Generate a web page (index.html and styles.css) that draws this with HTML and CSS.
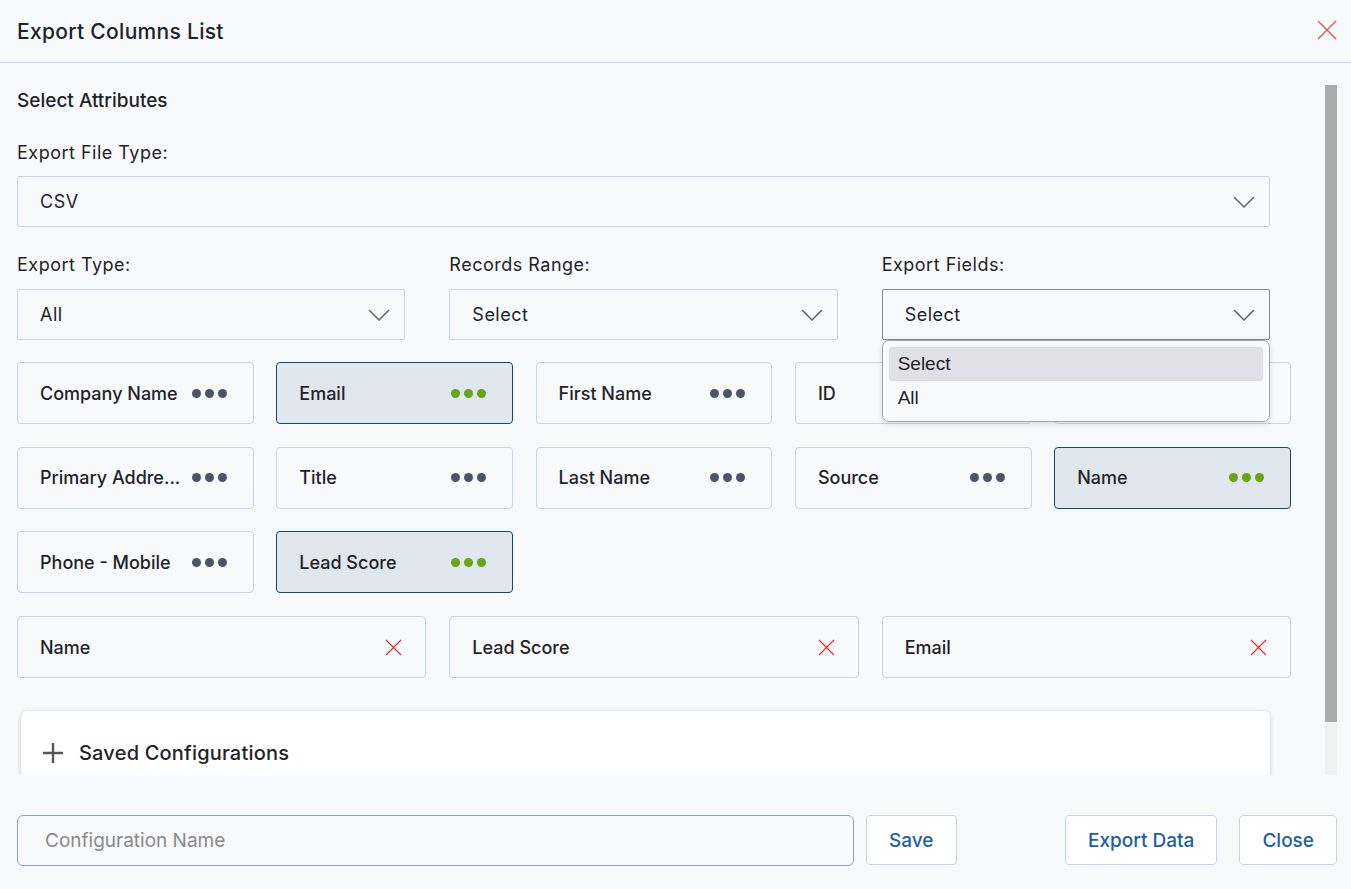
FILE: index.html
```html
<!DOCTYPE html>
<html lang="en">
<head>
    <meta charset="UTF-8">
    <meta name="viewport" content="width=device-width, initial-scale=1.0">
    <title>Export Columns List</title>
    <link rel="stylesheet" href="styles.css">
</head>
<body>

    <div class="modal">
        <div class="modal-header">
            <h2 class="modal-title">Export Columns List</h2>
            <button class="close-icon" type="button" aria-label="Close">
                <svg width="20" height="20" viewBox="0 0 20 20"><path d="M1 1L19 19M19 1L1 19" stroke="#e35656" stroke-width="1.4" fill="none"/></svg>
            </button>
        </div>

        <div class="modal-body">
            <div class="body-scroll">
                <div class="body-inner">
                    <h3 class="section-title">Select Attributes</h3>

                    <div class="field field-wide">
                        <label>Export File Type:</label>
                        <div class="select">
                            <span>CSV</span>
                            <svg class="chevron" width="22" height="12" viewBox="0 0 22 12"><path d="M1 1L11 11L21 1" stroke="#666" stroke-width="1.5" fill="none"/></svg>
                        </div>
                    </div>

                    <div class="field-row">
                        <div class="field">
                            <label>Export Type:</label>
                            <div class="select">
                                <span>All</span>
                                <svg class="chevron" width="22" height="12" viewBox="0 0 22 12"><path d="M1 1L11 11L21 1" stroke="#666" stroke-width="1.5" fill="none"/></svg>
                            </div>
                        </div>
                        <div class="field">
                            <label>Records Range:</label>
                            <div class="select">
                                <span>Select</span>
                                <svg class="chevron" width="22" height="12" viewBox="0 0 22 12"><path d="M1 1L11 11L21 1" stroke="#666" stroke-width="1.5" fill="none"/></svg>
                            </div>
                        </div>
                        <div class="field">
                            <label>Export Fields:</label>
                            <div class="select select-open">
                                <span>Select</span>
                                <svg class="chevron" width="22" height="12" viewBox="0 0 22 12"><path d="M1 1L11 11L21 1" stroke="#666" stroke-width="1.5" fill="none"/></svg>
                                <div class="dropdown">
                                    <div class="option active">Select</div>
                                    <div class="option">All</div>
                                </div>
                            </div>
                        </div>
                    </div>

                    <div class="chip-grid">
                        <div class="chip"><span class="chip-text">Company Name</span><span class="dots"><i></i><i></i><i></i></span></div>
                        <div class="chip selected"><span class="chip-text">Email</span><span class="dots"><i></i><i></i><i></i></span></div>
                        <div class="chip"><span class="chip-text">First Name</span><span class="dots"><i></i><i></i><i></i></span></div>
                        <div class="chip"><span class="chip-text">ID</span><span class="dots"><i></i><i></i><i></i></span></div>
                        <div class="chip"><span class="chip-text">Lead Source</span><span class="dots"><i></i><i></i><i></i></span></div>

                        <div class="chip" title="Primary Address"><span class="chip-text">Primary Addre...</span><span class="dots"><i></i><i></i><i></i></span></div>
                        <div class="chip"><span class="chip-text">Title</span><span class="dots"><i></i><i></i><i></i></span></div>
                        <div class="chip"><span class="chip-text">Last Name</span><span class="dots"><i></i><i></i><i></i></span></div>
                        <div class="chip"><span class="chip-text">Source</span><span class="dots"><i></i><i></i><i></i></span></div>
                        <div class="chip selected"><span class="chip-text">Name</span><span class="dots"><i></i><i></i><i></i></span></div>

                        <div class="chip"><span class="chip-text">Phone - Mobile</span><span class="dots"><i></i><i></i><i></i></span></div>
                        <div class="chip selected"><span class="chip-text">Lead Score</span><span class="dots"><i></i><i></i><i></i></span></div>
                    </div>

                    <div class="picked-grid">
                        <div class="picked">
                            <span>Name</span>
                            <svg width="17" height="17" viewBox="0 0 17 17"><path d="M1 1L16 16M16 1L1 16" stroke="#e0282b" stroke-width="1.1" fill="none"/></svg>
                        </div>
                        <div class="picked">
                            <span>Lead Score</span>
                            <svg width="17" height="17" viewBox="0 0 17 17"><path d="M1 1L16 16M16 1L1 16" stroke="#e0282b" stroke-width="1.1" fill="none"/></svg>
                        </div>
                        <div class="picked">
                            <span>Email</span>
                            <svg width="17" height="17" viewBox="0 0 17 17"><path d="M1 1L16 16M16 1L1 16" stroke="#e0282b" stroke-width="1.1" fill="none"/></svg>
                        </div>
                    </div>

                    <div class="config-card">
                        <svg width="20" height="20" viewBox="0 0 20 20"><path d="M10 0V20M0 10H20" stroke="#555" stroke-width="2.4" fill="none"/></svg>
                        <span>Saved Configurations</span>
                    </div>
                </div>
            </div>
            <div class="scrollbar"><div class="thumb"></div></div>
        </div>

        <div class="modal-footer">
            <input type="text" class="config-input" placeholder="Configuration Name">
            <button class="btn" type="button">Save</button>
            <button class="btn btn-push" type="button">Export Data</button>
            <button class="btn" type="button">Close</button>
        </div>
    </div>

</body>
</html>
```

FILE: styles.css
```css
body {
    margin: 0;
    font-family: 'Inter', 'Liberation Sans', sans-serif;
    background-color: #f8f9fb;
    color: #1f2328;
}

.modal {
    width: 1351px;
    height: 889px;
    display: flex;
    flex-direction: column;
}

.modal-header {
    height: 62px;
    display: flex;
    align-items: center;
    justify-content: space-between;
    padding: 0 14px 0 17px;
    border-bottom: 1px solid #c8d5e6;
}

.modal-title {
    margin: 0;
    font-size: 21px;
    font-weight: 500;
    letter-spacing: 0.3px;
}

.close-icon {
    border: none;
    background: none;
    padding: 0;
    width: 20px;
    height: 20px;
    margin-top: -2px;
    cursor: pointer;
}

.modal-body {
    display: flex;
    height: 690px;
    margin-top: 22px;
    padding-right: 14px;
}

.body-scroll {
    flex: 1;
    overflow: hidden;
}

.body-inner {
    padding: 4px 0 0 17px;
}

.section-title {
    margin: 0;
    font-size: 19px;
    font-weight: 500;
    line-height: 24px;
}

.field label {
    display: block;
    font-size: 18px;
    letter-spacing: 0.5px;
    line-height: 24px;
    margin-bottom: 12px;
}

.field-wide {
    width: 1253px;
    margin-top: 28px;
}

.field-wide label {
    margin-bottom: 11px;
}

.field-row {
    width: 1253px;
    display: grid;
    grid-template-columns: repeat(3, minmax(0, 1fr));
    column-gap: 44px;
    margin-top: 26px;
}

.select {
    position: relative;
    height: 51px;
    box-sizing: border-box;
    display: flex;
    align-items: center;
    justify-content: space-between;
    padding: 0 14px 0 22px;
    border: 1px solid #c8d5e6;
    border-radius: 2px;
    font-size: 18px;
    letter-spacing: 0.5px;
}

.select-open {
    border-color: #8a8a8a;
}

.dropdown {
    position: absolute;
    left: -1px;
    right: -1px;
    top: 50px;
    padding: 6px;
    background-color: #f8f9fb;
    border: 1px solid #a5a5a5;
    border-radius: 7px;
    box-shadow: 0 2px 6px rgba(0, 0, 0, 0.12);
    font-family: 'Liberation Sans', Arial, sans-serif;
    font-size: 19px;
    letter-spacing: 0;
    z-index: 5;
}

.option {
    height: 34px;
    line-height: 34px;
    padding-left: 9px;
    border-radius: 4px;
}

.option.active {
    background-color: #e1e0e6;
}

.chip-grid {
    width: 1274px;
    display: grid;
    grid-template-columns: repeat(5, minmax(0, 1fr));
    column-gap: 22.5px;
    row-gap: 22.5px;
    margin-top: 22px;
}

.chip {
    min-width: 0;
    height: 62px;
    box-sizing: border-box;
    display: flex;
    align-items: center;
    gap: 8px;
    padding: 0 26px 0 22px;
    border: 1px solid #c8d5e6;
    border-radius: 4px;
    font-size: 18px;
    font-weight: 500;
}

.chip.selected {
    background-color: #e1e7ef;
    border-color: #0d4a6e;
}

.chip-text {
    flex: 1;
    min-width: 0;
    white-space: nowrap;
    overflow: hidden;
}

.dots {
    display: flex;
    flex-shrink: 0;
    gap: 4px;
}

.dots i {
    width: 9px;
    height: 9px;
    border-radius: 50%;
    background-color: #4b5567;
}

.chip.selected .dots i {
    background-color: #68a512;
}

.picked-grid {
    width: 1274px;
    display: grid;
    grid-template-columns: repeat(3, minmax(0, 1fr));
    column-gap: 23px;
    margin-top: 23px;
}

.picked {
    height: 62px;
    box-sizing: border-box;
    display: flex;
    align-items: center;
    justify-content: space-between;
    padding: 0 23px 0 22px;
    border: 1px solid #c8d5e6;
    border-radius: 4px;
    font-size: 18px;
    font-weight: 500;
}

.config-card {
    width: 1249px;
    height: 90px;
    box-sizing: border-box;
    margin: 33px 0 32px 4px;
    display: flex;
    align-items: flex-start;
    gap: 16px;
    padding: 32px 0 0 22px;
    background-color: #fff;
    border-radius: 6px;
    box-shadow: 0 1px 4px rgba(0, 0, 0, 0.22);
    font-size: 20px;
    font-weight: 500;
    letter-spacing: 0.2px;
}

.config-card span {
    line-height: 20px;
}

.scrollbar {
    width: 12px;
    background-color: #f1f1f1;
}

.thumb {
    height: 637px;
    background-color: #ababab;
}

.modal-footer {
    display: flex;
    align-items: flex-start;
    padding: 40px 14px 0 17px;
}

.config-input {
    width: 837px;
    height: 51px;
    box-sizing: border-box;
    padding: 0 27px;
    border: 1px solid #8fa1ba;
    border-radius: 6px;
    background-color: #f8f9fb;
    font-family: 'Inter', sans-serif;
    font-size: 19px;
    color: #1f2328;
}

.config-input::placeholder {
    color: #8a8a8a;
}

.btn {
    height: 50px;
    margin-left: 12px;
    padding: 0 22px;
    background-color: #fff;
    border: 1px solid #c8d5e6;
    border-radius: 4px;
    font-family: 'Inter', sans-serif;
    font-size: 19px;
    font-weight: 500;
    color: #1b60a6;
    cursor: pointer;
}

.btn-push {
    margin-left: auto;
}

.btn-push + .btn {
    margin-left: 22px;
}
```
